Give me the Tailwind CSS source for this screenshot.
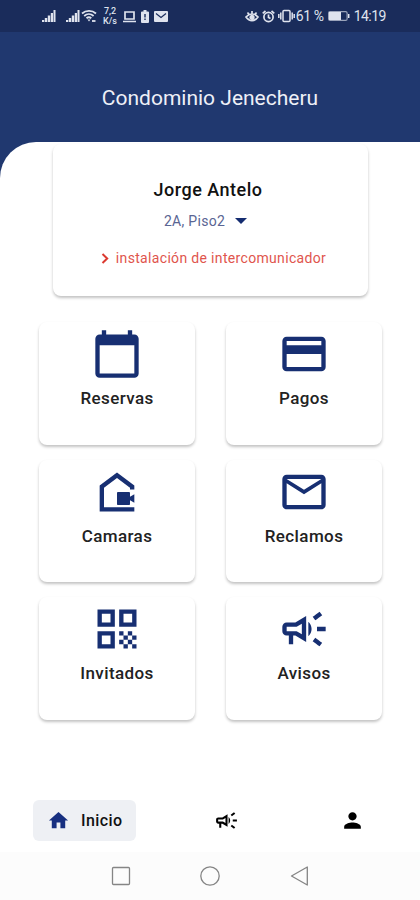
<!DOCTYPE html>
<html lang="es">

<head>
    <meta charset="UTF-8" />
    <meta name="viewport" content="width=device-width, initial-scale=1.0" />
    <title>Condominio Jenecheru</title>
    <script src="https://cdn.jsdelivr.net/npm/@tailwindcss/browser@4"></script>
</head>

<body class="bg-white font-['Roboto',sans-serif] text-[#111111]">
    <div class="flex flex-col w-[420px] h-[900px] overflow-hidden bg-[#20386f]">

        <!-- Status bar -->
        <div class="flex items-center justify-between h-8 shrink-0 bg-[#1a2c5b] pl-[41px] pr-[34px] text-[#dfe3ee]">
            <div class="flex items-center">
                <svg class="w-[15px] h-[14px]" viewBox="0 0 15 14" fill="currentColor">
                    <path d="M1 11h2.200v2H1zM3.800 9h2.400v4H3.800zM6.800 6.500h2.400V13H6.800zM9.800 4H12v9H9.800zM12.500 1H14.500v12h-2z" />
                </svg>
                <svg class="w-[15px] h-[14px] ml-[9px]" viewBox="0 0 15 14" fill="currentColor">
                    <path d="M1 11h2.200v2H1zM3.800 9h2.400v4H3.800zM6.800 6.500h2.400V13H6.800zM9.800 4H12v9H9.800zM12.500 1H14.500v12h-2z" />
                </svg>
                <svg class="w-4 h-[14px] ml-px" viewBox="0 0 16 14" fill="none" stroke="currentColor" stroke-width="1.800">
                    <path d="M1 4.500c4-3.600 10-3.600 14 0M3.200 7c2.800-2.500 6.600-2.500 9.400 0M5.500 9.300c1.500-1.300 3.300-1.300 4.800 0" />
                    <path d="M6.500 10.500h3L8 12.500z" fill="currentColor" stroke="none" />
                    <path d="M11 12h3.500" />
                </svg>
                <div class="w-4 ml-[5px] text-center text-[9px] leading-[10px] font-medium">7,2<br />K/s</div>
                <svg class="w-[15px] h-[13px] ml-[4px]" viewBox="0 0 15 13" fill="none" stroke="currentColor" stroke-width="1.700">
                    <path d="M3 2h9v7H3zM1 11.500h13" />
                </svg>
                <svg class="w-[8px] h-[13px] ml-[4px]" viewBox="0 0 8 13" fill="currentColor">
                    <path d="M2.500 0h3v1.500H7q1 0 1 1V12q0 1-1 1H1q-1 0-1-1V2.500q0-1 1-1h1.500z" />
                    <path d="M3.300 4h1.400v3.500H3.300zM3.300 8.500h1.400v1.500H3.300z" fill="#1a2c5b" />
                </svg>
                <svg class="w-[14px] h-[11px] ml-[5px]" viewBox="0 0 14 11">
                    <rect width="14" height="11" rx="1" fill="currentColor" />
                    <path d="M2 2.500l5 4 5-4" fill="none" stroke="#1a2c5b" stroke-width="1.200" />
                </svg>
            </div>
            <div class="flex items-center">
                <svg class="w-[14px] h-[13px]" viewBox="0 0 14 13" fill="none" stroke="currentColor" stroke-width="1.700">
                    <path d="M1 7c3.500-4 8.500-4 12 0-3.500 5-8.500 5-12 0zM7 1v3M2.500 2.500l1.500 2M11.500 2.500l-1.500 2" />
                    <circle cx="7" cy="7.500" r="1.800" fill="currentColor" />
                </svg>
                <svg class="w-[13px] h-[13px] ml-[3px]" viewBox="0 0 13 13" fill="none" stroke="currentColor" stroke-width="1.700">
                    <circle cx="6.500" cy="7" r="4.600" />
                    <path d="M.7 3.300L3.500 1M12.300 3.300L9.500 1M6.500 4.500V7.500l2 1" />
                </svg>
                <svg class="w-[17px] h-[14px] ml-[3px]" viewBox="0 0 17 14" fill="none" stroke="currentColor" stroke-width="1.500">
                    <rect x="5" y="1.500" width="7" height="11" rx="1" />
                    <path d="M2.800 3.500v7M.8 5v4M14.200 3.500v7M16.200 5v4" />
                </svg>
                <span class="ml-px text-sm leading-none whitespace-nowrap tracking-[-0.4px]">61 %</span>
                <svg class="w-[22px] h-[10px] ml-1" viewBox="0 0 22 10">
                    <rect x=".6" y=".6" width="18.500" height="8.800" rx="1.500" fill="none" stroke="currentColor" stroke-opacity=".65" stroke-width="1.200" />
                    <rect x="1" y="1" width="12" height="8" fill="currentColor" />
                    <path d="M20.700 3v4" stroke="currentColor" stroke-width="1.500" />
                </svg>
                <span class="ml-1 text-sm leading-none tracking-[-0.5px]">14:19</span>
            </div>
        </div>

        <!-- Header -->
        <header class="flex items-center justify-center h-[110px] shrink-0 pt-[23px]">
            <h1 class="text-[21px] leading-none tracking-[0px] text-[#eef0f7]">Condominio Jenecheru</h1>
        </header>

        <main class="flex flex-col flex-1 bg-white rounded-tl-[36px]">
            <!-- Resident -->
            <section class="flex flex-col items-center w-[315px] h-[152px] ml-[53px] mt-[2px] pt-[35px] rounded-lg bg-white shadow-[0_2px_3px_rgba(0,0,0,0.24)]">
                <h2 class="mr-[5px] text-lg leading-[22px] font-medium tracking-[0.5px]">Jorge Antelo</h2>
                <div class="flex items-center h-5 mt-[10px] mr-[10px] text-[#5a6593]">
                    <span class="text-sm tracking-[0.3px]">2A, Piso2</span>
                    <svg class="w-3 h-[6px] ml-[10px]" viewBox="0 0 12 6" fill="#142c70"><path d="M0 0h12L6 6z" /></svg>
                </div>
                <div class="flex items-center h-5 mt-[17px] ml-[6px] text-[#df554d]">
                    <svg class="w-2 h-[11px] mr-[7px]" viewBox="0 0 8 11" fill="none" stroke="#db3930" stroke-width="2"><path d="M1.500 1l4.700 4.500-4.700 4.500" /></svg>
                    <span class="text-sm tracking-[0.33px]">instalación de intercomunicador</span>
                </div>
            </section>

            <!-- Menu -->
            <section class="grid grid-cols-2 gap-x-[31px] gap-y-[15px] mt-[26px] ml-[39px] mr-[38px] text-[17px] font-medium text-[#222222]">
                <div class="flex flex-col items-center h-[122.500px] pt-[6px] rounded-lg bg-white shadow-[0_2px_3px_rgba(0,0,0,0.24)]">
                    <svg class="w-[52px] h-[52px]" viewBox="0 0 24 24" fill="#172f72">
                        <path d="M20 3h-1V1h-2v2H7V1H5v2H4c-1.100 0-2 .9-2 2v16c0 1.100.9 2 2 2h16c1.100 0 2-.9 2-2V5c0-1.100-.9-2-2-2zm0 18H4V8h16v13z" />
                    </svg>
                    <span class="mt-2 leading-5 tracking-[0.4px]">Reservas</span>
                </div>
                <div class="flex flex-col items-center h-[122.500px] pt-[6px] rounded-lg bg-white shadow-[0_2px_3px_rgba(0,0,0,0.24)]">
                    <svg class="w-[52px] h-[52px]" viewBox="0 0 24 24" fill="#172f72">
                        <path d="M20 4H4c-1.110 0-1.990.89-1.990 2L2 18c0 1.110.89 2 2 2h16c1.110 0 2-.89 2-2V6c0-1.110-.89-2-2-2zm0 14H4v-6h16v6zm0-10H4V6h16v2z" />
                    </svg>
                    <span class="mt-2 leading-5 tracking-[0.4px]">Pagos</span>
                </div>
                <div class="flex flex-col items-center h-[122.500px] pt-[6px] rounded-lg bg-white shadow-[0_2px_3px_rgba(0,0,0,0.24)]">
                    <svg class="w-[52px] h-[52px]" viewBox="0 0 24 24" fill="#172f72">
                        <path d="M12 3L4 9v12h16v-2H6v-9l6-4.500 6 4.500v.8h2V9z" />
                        <path d="M12.500 12h5c.3 0 .5.200.5.500v1.700l2-1.200v4l-2-1.200v1.700c0 .3-.2.500-.5.500h-5c-.3 0-.5-.2-.5-.5v-5c0-.3.200-.5.500-.5z" />
                    </svg>
                    <span class="mt-2 leading-5 tracking-[0.4px]">Camaras</span>
                </div>
                <div class="flex flex-col items-center h-[122.500px] pt-[6px] rounded-lg bg-white shadow-[0_2px_3px_rgba(0,0,0,0.24)]">
                    <svg class="w-[52px] h-[52px]" viewBox="0 0 24 24" fill="#172f72">
                        <path d="M22 6c0-1.100-.9-2-2-2H4c-1.100 0-2 .9-2 2v12c0 1.100.9 2 2 2h16c1.100 0 2-.9 2-2V6zm-2 0l-8 5-8-5h16zm0 12H4V8l8 5 8-5v10z" />
                    </svg>
                    <span class="mt-2 leading-5 tracking-[0.4px]">Reclamos</span>
                </div>
                <div class="flex flex-col items-center h-[122.500px] pt-[6px] rounded-lg bg-white shadow-[0_2px_3px_rgba(0,0,0,0.24)]">
                    <svg class="w-[52px] h-[52px]" viewBox="0 0 24 24" fill="#172f72">
                        <path d="M3 11h8V3H3v8zm2-6h4v4H5V5zM3 21h8v-8H3v8zm2-6h4v4H5v-4zM13 3v8h8V3h-8zm6 6h-4V5h4v4zM19 19h2v2h-2zM13 13h2v2h-2zM15 15h2v2h-2zM13 17h2v2h-2zM15 19h2v2h-2zM17 17h2v2h-2zM17 13h2v2h-2zM19 15h2v2h-2z" />
                    </svg>
                    <span class="mt-2 leading-5 tracking-[0.4px]">Invitados</span>
                </div>
                <div class="flex flex-col items-center h-[122.500px] pt-[6px] rounded-lg bg-white shadow-[0_2px_3px_rgba(0,0,0,0.24)]">
                    <svg class="w-[52px] h-[52px]" viewBox="0 0 24 24" fill="#172f72">
                        <path d="M18 11v2h4v-2h-4zm-2 6.610c.96.71 2.210 1.650 3.200 2.390.4-.53.8-1.070 1.200-1.600-.99-.74-2.240-1.680-3.200-2.400-.4.54-.8 1.080-1.200 1.610zM20.400 5.600c-.4-.53-.8-1.070-1.200-1.600-.99.74-2.240 1.680-3.200 2.400.4.53.8 1.070 1.200 1.600.96-.72 2.210-1.650 3.200-2.400zM4 9c-1.100 0-2 .9-2 2v2c0 1.100.9 2 2 2h1v4h2v-4h1l5 3V6L8 9H4zm5.030 1.710L11 9.530v4.940l-1.970-1.180-.48-.29H4v-2h4.550l.48-.29zM15.500 12c0-1.330-.58-2.530-1.500-3.350v6.690c.92-.81 1.500-2.010 1.500-3.340z" />
                    </svg>
                    <span class="mt-2 leading-5 tracking-[0.4px]">Avisos</span>
                </div>
            </section>

            <!-- Bottom navigation -->
            <nav class="flex items-center mt-auto mb-[11px] pl-[33px]">
                <div class="flex items-center w-[103px] h-[41px] pl-[14px] rounded-md bg-[#eef0f4]">
                    <svg class="w-[23px] h-[23px]" viewBox="0 0 24 24" fill="#172f80"><path d="M10 20v-6h4v6h5v-8h3L12 3 2 12h3v8z" /></svg>
                    <span class="ml-[11px] text-base leading-none font-medium tracking-[0.4px]">Inicio</span>
                </div>
                <svg class="w-[25px] h-[25px] ml-[78px]" viewBox="0 0 24 24" fill="black">
                    <path d="M18 11v2h4v-2h-4zm-2 6.610c.96.71 2.210 1.650 3.200 2.390.4-.53.8-1.070 1.200-1.600-.99-.74-2.240-1.680-3.200-2.400-.4.54-.8 1.080-1.200 1.610zM20.400 5.600c-.4-.53-.8-1.070-1.200-1.600-.99.74-2.240 1.680-3.200 2.400.4.53.8 1.070 1.200 1.600.96-.72 2.210-1.650 3.200-2.400zM4 9c-1.100 0-2 .9-2 2v2c0 1.100.9 2 2 2h1v4h2v-4h1l5 3V6L8 9H4zm5.030 1.710L11 9.530v4.940l-1.970-1.180-.48-.29H4v-2h4.550l.48-.29zM15.500 12c0-1.330-.58-2.530-1.500-3.350v6.690c.92-.81 1.500-2.010 1.500-3.340z" />
                </svg>
                <svg class="w-[25px] h-[25px] ml-[101px]" viewBox="0 0 24 24" fill="black"><path d="M12 12c2.210 0 4-1.790 4-4s-1.790-4-4-4-4 1.790-4 4 1.790 4 4 4zm0 2c-2.670 0-8 1.340-8 4v2h16v-2c0-2.660-5.330-4-8-4z" /></svg>
            </nav>
        </main>

        <!-- System buttons -->
        <div class="flex items-center h-12 shrink-0 pl-[110.500px] gap-[69.500px] bg-[#fcfcfc]">
            <svg class="w-5 h-5" viewBox="0 0 20 20" fill="none" stroke="#858585" stroke-width="1.300"><rect x="1.500" y="1.500" width="17" height="17" rx="1" /></svg>
            <svg class="w-5 h-5" viewBox="0 0 20 20" fill="none" stroke="#858585" stroke-width="1.300"><circle cx="10" cy="10" r="9.200" /></svg>
            <svg class="w-5 h-5" viewBox="0 0 20 20" fill="none" stroke="#858585" stroke-width="1.300" stroke-linejoin="round"><path d="M17.300 1v18L1.500 10z" /></svg>
        </div>
    </div>
</body>

</html>
